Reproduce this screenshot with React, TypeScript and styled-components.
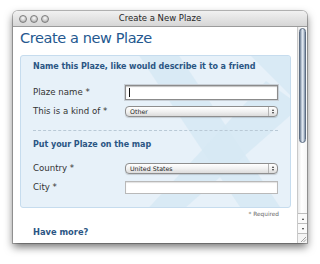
import React from "react";
import styled, { createGlobalStyle } from "styled-components";

const Global = createGlobalStyle`
  html, body { margin: 0; padding: 0; background: #ffffff; }
  body { font-family: "DejaVu Sans", "Liberation Sans", sans-serif; }
  * { box-sizing: border-box; }
`;

const Stage = styled.div`
  width: 320px;
  height: 264px;
  padding: 11px 13px 0 13px;
  background: #ffffff;
`;

const Window = styled.div`
  width: 294px;
  height: 232px;
  display: flex;
  flex-direction: column;
  border-radius: 5px 5px 0 0;
  background: #ffffff;
  box-shadow: 0 4px 9px rgba(0, 0, 0, 0.55), 0 0 0 1px rgba(0, 0, 0, 0.25);
  overflow: hidden;
`;

const TitleBar = styled.div`
  height: 16px;
  flex: none;
  display: flex;
  align-items: center;
  position: relative;
  padding-left: 6px;
  gap: 2px;
  background: linear-gradient(#f1f1f1, #d6d6d6);
  border-bottom: 1px solid #9b9b9b;
`;

const Light = styled.span`
  width: 8px;
  height: 8px;
  border-radius: 50%;
  background: radial-gradient(circle at 50% 35%, #fbfbfb 0%, #c9c9c9 55%, #9a9a9a 100%);
  border: 1px solid #7d7d7d;
  margin-right: 1px;
`;

const TitleText = styled.div`
  position: absolute;
  left: 0;
  right: 0;
  top: 0;
  bottom: 0;
  text-align: center;
  font-size: 8.5px;
  line-height: 15px;
  color: #262626;
  pointer-events: none;
`;

const Body = styled.div`
  flex: 1;
  display: flex;
  min-height: 0;
`;

const Content = styled.div`
  flex: 1;
  padding: 2px 6px 0 7px;
  min-width: 0;
`;

const Heading = styled.h1`
  margin: 0 0 8px 0;
  font-weight: normal;
  font-size: 14.5px;
  line-height: 18px;
  color: #24588f;
  letter-spacing: -0.4px;
`;

const Panel = styled.div`
  position: relative;
  overflow: hidden;
  border: 1px solid #c6dcee;
  border-radius: 3px;
  background: #e7f1f9;
  padding: 5px 12px 13px 12px;
`;

const Watermark = styled.svg`
  position: absolute;
  left: 95px;
  top: -5px;
  width: 190px;
  height: 165px;
  pointer-events: none;
`;

const Inner = styled.div`
  position: relative;
`;

const SectionTitle = styled.div<{ $top?: number }>`
  font-size: 8px;
  font-weight: bold;
  line-height: 12px;
  color: #2b5684;
  letter-spacing: -0.05px;
  margin-top: ${(p) => p.$top ?? 0}px;
  margin-bottom: 12px;
  white-space: nowrap;
`;

const Row = styled.div<{ $gap?: number }>`
  display: grid;
  grid-template-columns: 92px 1fr;
  align-items: center;
  margin-top: ${(p) => p.$gap ?? 0}px;
`;

const Label = styled.label`
  font-size: 8.6px;
  color: #333333;
  white-space: nowrap;
  line-height: 11px;
`;

const TextInput = styled.div<{ $focused?: boolean; $h: number }>`
  height: ${(p) => p.$h}px;
  background: #ffffff;
  border: 1px solid ${(p) => (p.$focused ? "#8b8b8b" : "#b9b9b9")};
  box-shadow: ${(p) =>
    p.$focused ? "0 0 0 1px #c8cfd6, inset 0 1px 1px rgba(0,0,0,0.25)" : "inset 0 1px 1px rgba(0,0,0,0.12)"};
  position: relative;
`;

const Caret = styled.span`
  position: absolute;
  left: 3px;
  top: 2px;
  bottom: 2px;
  width: 1px;
  background: #111;
`;

const Select = styled.div`
  height: 11px;
  border: 1px solid #8e8e8e;
  border-radius: 4px;
  background: linear-gradient(#ffffff, #f1f1f1 50%, #dcdcdc);
  display: flex;
  align-items: center;
  font-size: 6.3px;
  color: #1d1d1d;
  padding-left: 4px;
  position: relative;
  box-shadow: 0 1px 1px rgba(0, 0, 0, 0.15);
`;

const Stepper = styled.span`
  position: absolute;
  right: 0;
  top: 0;
  bottom: 0;
  width: 9px;
  border-left: 1px solid #b4b4b4;
  display: flex;
  flex-direction: column;
  align-items: center;
  justify-content: center;
  gap: 1px;
`;

const Tri = styled.span<{ $up?: boolean }>`
  width: 0;
  height: 0;
  border-left: 1.5px solid transparent;
  border-right: 1.5px solid transparent;
  ${(p) => (p.$up ? "border-bottom: 2px solid #333;" : "border-top: 2px solid #333;")}
`;

const Divider = styled.div`
  margin-top: 13px;
  border-top: 1px dashed #b9c9d6;
`;

const Required = styled.div`
  text-align: right;
  font-size: 5.8px;
  color: #666;
  padding: 2px 12px 0 0;
  line-height: 9px;
`;

const HaveMore = styled.div`
  margin: 8px 0 0 13px;
  font-size: 8.3px;
  font-weight: bold;
  color: #2b5684;
`;

const Scrollbar = styled.div`
  width: 10px;
  flex: none;
  display: flex;
  flex-direction: column;
  background: linear-gradient(90deg, #e9e9e9, #ffffff 40%, #f6f6f6);
  border-left: 1px solid #c9c9c9;
`;

const Thumb = styled.div`
  margin: 1px 1px 0 1px;
  height: 115px;
  border-radius: 5px;
  background: linear-gradient(90deg, #6c7c91, #c5d0de 35%, #e6ecf3 55%, #a6b4c6 85%, #6f7f95);
  border: 1px solid #5d6d82;
`;

const Track = styled.div`
  flex: 1;
`;

const ArrowBtn = styled.div`
  height: 10px;
  border-top: 1px solid #bdbdbd;
  display: flex;
  align-items: center;
  justify-content: center;
  background: #fafafa;
`;

const Grip = styled.div`
  height: 10px;
  border-top: 1px solid #bdbdbd;
  background: #f4f4f4;
  position: relative;
`;

const GripLines = styled.svg`
  position: absolute;
  right: 0;
  bottom: 0;
`;

export default function App() {
  return (
    <>
      <Global />
      <Stage>
        <Window>
          <TitleBar>
            <Light />
            <Light />
            <Light />
            <TitleText>Create a New Plaze</TitleText>
          </TitleBar>
          <Body>
            <Content>
              <Heading>Create a new Plaze</Heading>
              <Panel>
                <Watermark viewBox="0 0 190 165">
                  <path d="M20 0 L60 0 L170 165 L130 165 Z" fill="#d6e8f4" opacity="0.8" />
                  <path d="M150 30 L185 55 L60 165 L25 165 Z" fill="#d6e8f4" opacity="0.8" />
                  <path d="M130 0 L190 0 L190 60 Z" fill="#d6e8f4" opacity="0.8" />
                </Watermark>
                <Inner>
                  <SectionTitle>Name this Plaze, like would describe it to a friend</SectionTitle>
                  <Row>
                    <Label>Plaze name *</Label>
                    <TextInput $focused $h={15}>
                      <Caret />
                    </TextInput>
                  </Row>
                  <Row $gap={6}>
                    <Label>This is a kind of *</Label>
                    <Select>
                      Other
                      <Stepper>
                        <Tri $up />
                        <Tri />
                      </Stepper>
                    </Select>
                  </Row>
                  <Divider />
                  <SectionTitle $top={8}>Put your Plaze on the map</SectionTitle>
                  <Row>
                    <Label>Country *</Label>
                    <Select>
                      United States
                      <Stepper>
                        <Tri $up />
                        <Tri />
                      </Stepper>
                    </Select>
                  </Row>
                  <Row $gap={7}>
                    <Label>City *</Label>
                    <TextInput $h={13} />
                  </Row>
                </Inner>
              </Panel>
              <Required>* Required</Required>
              <HaveMore>Have more?</HaveMore>
            </Content>
            <Scrollbar>
              <Thumb />
              <Track />
              <ArrowBtn>
                <Tri $up />
              </ArrowBtn>
              <ArrowBtn>
                <Tri />
              </ArrowBtn>
              <Grip>
                <GripLines width="8" height="8" viewBox="0 0 8 8">
                  <path d="M7 2 L2 7 M7 4.5 L4.5 7 M7 7 L7 7" stroke="#8a8a8a" strokeWidth="0.8" />
                </GripLines>
              </Grip>
            </Scrollbar>
          </Body>
        </Window>
      </Stage>
    </>
  );
}
